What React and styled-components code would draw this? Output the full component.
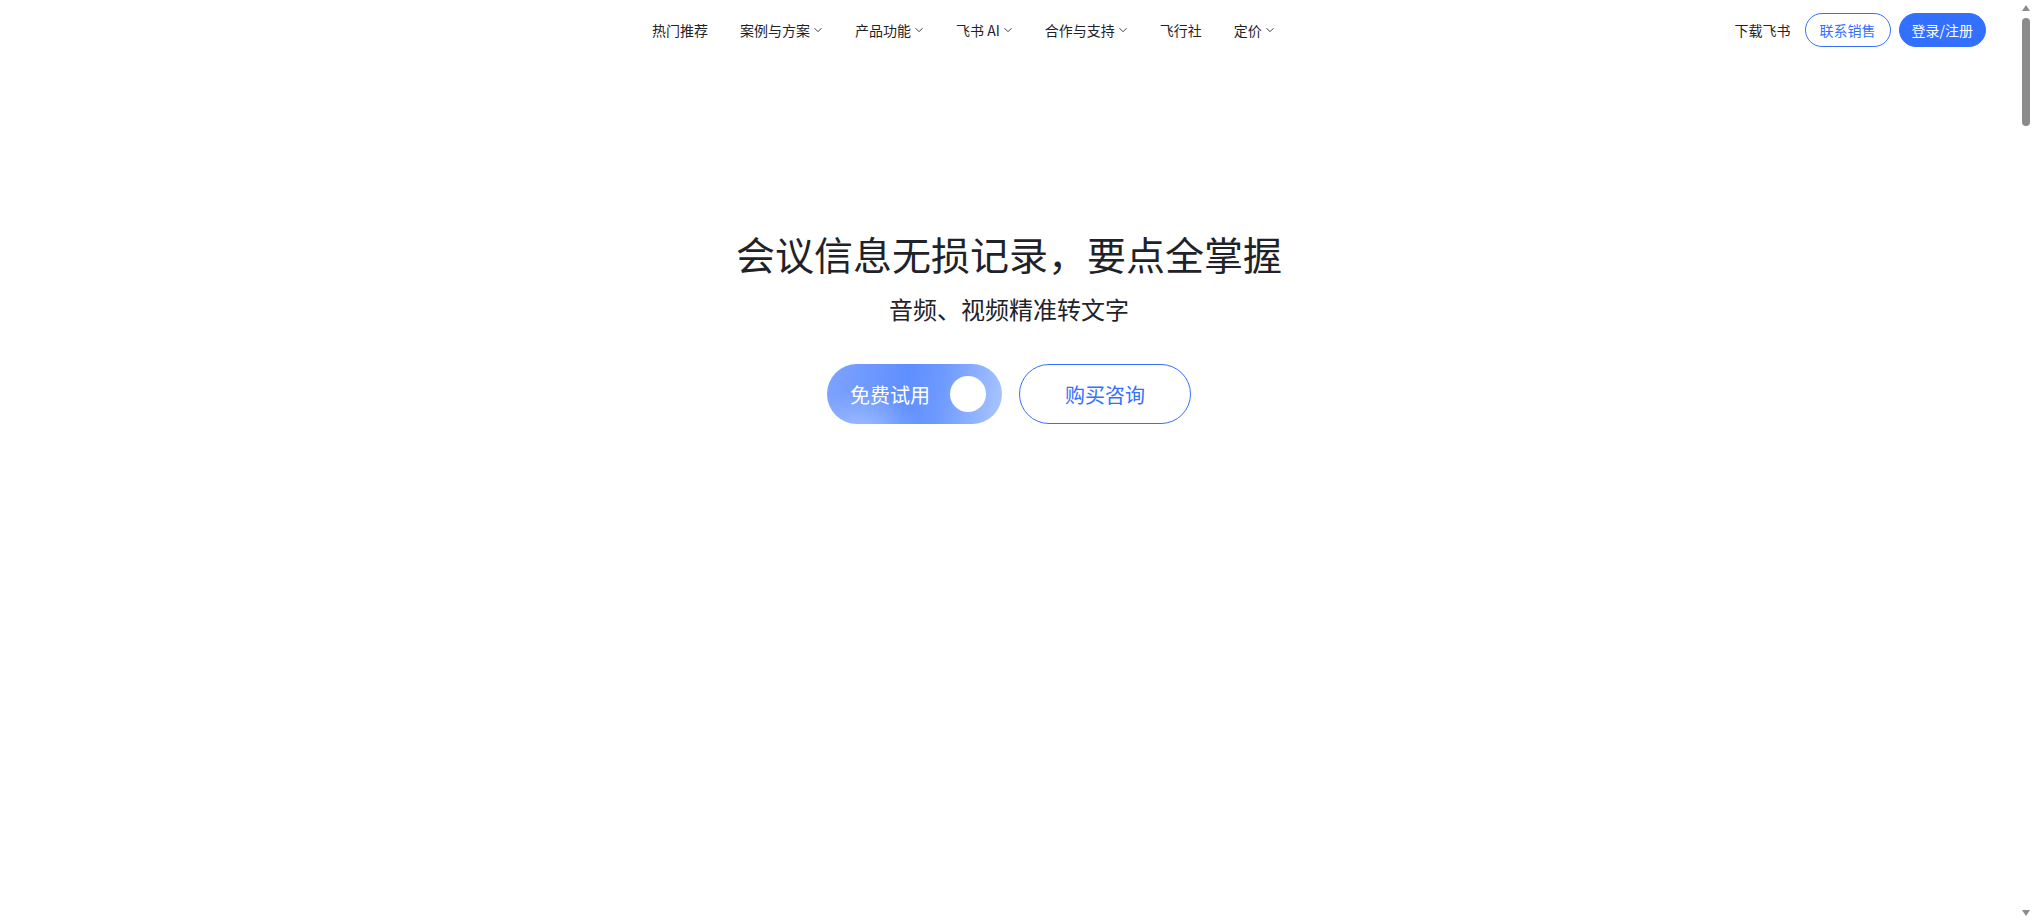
import React from "react";
import styled, { createGlobalStyle } from "styled-components";

const GlobalStyle = createGlobalStyle`
  html, body {
    margin: 0;
    padding: 0;
    background: #fff;
    overflow: hidden;
  }
  body {
    font-family: "Noto Sans CJK SC", "Noto Sans", "Liberation Sans", sans-serif;
    color: #1f2329;
    -webkit-font-smoothing: antialiased;
  }
`;

const Window = styled.div`
  display: flex;
  height: 100vh;
`;

const Main = styled.main`
  flex: 1;
  min-width: 0;
`;

// fake browser scrollbar, as in the screenshot
const ScrollBar = styled.div`
  width: 15px;
  display: flex;
  flex-direction: column;
  align-items: center;
  background: #fff;
`;

const ScrollArrow = styled.div`
  height: 15px;
  width: 100%;
  display: flex;
  align-items: center;
  justify-content: center;
`;

const ScrollTrack = styled.div`
  flex: 1;
  padding-top: 3px;
  padding-left: 1px;
`;

const ScrollThumb = styled.div`
  width: 8px;
  height: 108px;
  border-radius: 4px;
  background: #8b8b8b;
`;

const Header = styled.header`
  height: 60px;
  display: flex;
  align-items: center;
  padding: 0 32px 0 636px;
`;

const Nav = styled.nav`
  display: flex;
  align-items: center;
  flex: 1;
`;

const NavItem = styled.a`
  display: flex;
  align-items: center;
  gap: 3px;
  padding: 0 16px;
  font-size: 14px;
  line-height: 20px;
  color: #1f2329;
  text-decoration: none;
  cursor: pointer;
  white-space: nowrap;
`;

const Actions = styled.div`
  display: flex;
  align-items: center;
  gap: 8px;
`;

const TextLink = styled.a`
  font-size: 14px;
  line-height: 20px;
  color: #1f2329;
  margin-right: 6px;
  cursor: pointer;
`;

const PillButton = styled.button`
  height: 34px;
  padding: 0 ${(p) => (p.$primary ? "12px" : "14px")};
  border-radius: 17px;
  font-family: inherit;
  font-size: 14px;
  line-height: 20px;
  cursor: pointer;
  border: 1px solid #3370ff;
  color: ${(p) => (p.$primary ? "#fff" : "#3370ff")};
  background: ${(p) => (p.$primary ? "#3370ff" : "#fff")};
`;

const Hero = styled.section`
  display: flex;
  flex-direction: column;
  align-items: center;
  padding-top: 165px;
`;

const Title = styled.h1`
  margin: 0;
  font-size: 39px;
  line-height: 56px;
  font-weight: 400;
  color: #1f2329;
`;

const Subtitle = styled.p`
  margin: 11px 0 0;
  font-size: 24px;
  line-height: 34px;
  color: #1f2329;
`;

const ButtonRow = styled.div`
  display: flex;
  gap: 17px;
  margin-top: 38px;
`;

const TryButton = styled.button`
  width: 175px;
  height: 60px;
  border: none;
  border-radius: 30px;
  padding: 0 16px 0 23px;
  display: flex;
  align-items: center;
  justify-content: space-between;
  font-family: inherit;
  font-size: 20px;
  font-weight: 400;
  color: #fff;
  cursor: pointer;
  background:
    radial-gradient(ellipse 60px 40px at 20% 110%, rgba(170, 196, 255, 0.8), transparent),
    linear-gradient(100deg, #7fa3ff 0%, #5e8fff 45%, #6f9bff 65%, #abc6ff 100%);
`;

const Knob = styled.span`
  width: 36px;
  height: 36px;
  border-radius: 50%;
  background: #fff;
`;

const ConsultButton = styled.button`
  width: 172px;
  height: 60px;
  border: 1px solid #3370ff;
  border-radius: 30px;
  background: #fff;
  font-family: inherit;
  font-size: 20px;
  color: #3370ff;
  cursor: pointer;
`;

const Chevron = () => (
  <svg width="10" height="10" viewBox="0 0 10 10" fill="none">
    <path d="M1.5 3.2 L5 6.7 L8.5 3.2" stroke="#3a3f46" strokeWidth="1" />
  </svg>
);

const Triangle = ({ down }) => (
  <svg width="8" height="6" viewBox="0 0 8 6">
    <path d={down ? "M0 0 H8 L4 6 Z" : "M0 6 H8 L4 0 Z"} fill="#8b8b8b" />
  </svg>
);

const navItems = [
  { label: "热门推荐" },
  { label: "案例与方案", menu: true },
  { label: "产品功能", menu: true },
  { label: "飞书 AI", menu: true },
  { label: "合作与支持", menu: true },
  { label: "飞行社" },
  { label: "定价", menu: true },
];

export default function App() {
  return (
    <Window>
      <GlobalStyle />
      <Main>
        <Header>
          <Nav>
            {navItems.map((item) => (
              <NavItem key={item.label}>
                {item.label}
                {item.menu && <Chevron />}
              </NavItem>
            ))}
          </Nav>
          <Actions>
            <TextLink>下载飞书</TextLink>
            <PillButton>联系销售</PillButton>
            <PillButton $primary>登录/注册</PillButton>
          </Actions>
        </Header>

        {/* hero */}
        <Hero>
          <Title>会议信息无损记录，要点全掌握</Title>
          <Subtitle>音频、视频精准转文字</Subtitle>
          <ButtonRow>
            <TryButton>
              免费试用
              <Knob />
            </TryButton>
            <ConsultButton>购买咨询</ConsultButton>
          </ButtonRow>
        </Hero>
      </Main>

      <ScrollBar>
        <ScrollArrow>
          <Triangle />
        </ScrollArrow>
        <ScrollTrack>
          <ScrollThumb />
        </ScrollTrack>
        <ScrollArrow>
          <Triangle down />
        </ScrollArrow>
      </ScrollBar>
    </Window>
  );
}
